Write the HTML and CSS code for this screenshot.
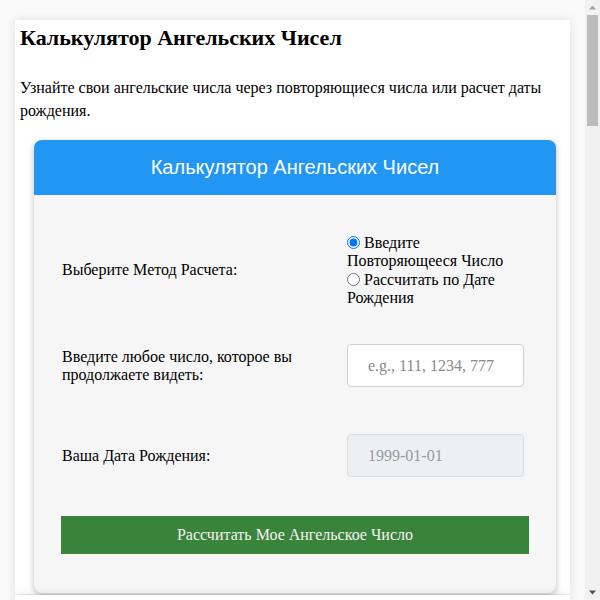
FILE: index.html
```html
<!DOCTYPE html>
<html lang="ru">
<head>
<meta charset="utf-8">
<title>Калькулятор Ангельских Чисел</title>
<link rel="stylesheet" href="styles.css">
</head>
<body>
<div class="viewport">
<div class="page">
  <h1 class="title">Калькулятор Ангельских Чисел</h1>
  <p class="intro">Узнайте свои ангельские числа через повторяющиеся числа или расчет даты рождения.</p>
  <div class="card">
    <div class="card-head">Калькулятор Ангельских Чисел</div>
    <div class="card-body">
      <div class="row row-method">
        <div class="label">Выберите Метод Расчета:</div>
        <div class="control radios">
          <label class="radio-opt"><input type="radio" name="method" class="radio" checked> Введите Повторяющееся Число</label>
          <label class="radio-opt"><input type="radio" name="method" class="radio"> Рассчитать по Дате Рождения</label>
        </div>
      </div>
      <div class="row row-number">
        <div class="label">Введите любое число, которое вы продолжаете видеть:</div>
        <div class="control"><input type="text" class="field" placeholder="e.g., 111, 1234, 777"></div>
      </div>
      <div class="row row-date">
        <div class="label">Ваша Дата Рождения:</div>
        <div class="control"><input type="text" class="field field-disabled" placeholder="1999-01-01" disabled></div>
      </div>
      <button class="submit" type="button">Рассчитать Мое Ангельское Число</button>
    </div>
  </div>
</div>
<div class="page page-more"></div>
</div>
<div class="scrollbar" aria-hidden="true">
  <div class="sb-btn"><svg width="15" height="15" viewBox="0 0 15 15"><path d="M4 9.5 L7.5 5.5 L11 9.5 Z" fill="#a3a3a3"/></svg></div>
  <div class="sb-track"><div class="sb-thumb"></div></div>
  <div class="sb-btn"><svg width="15" height="15" viewBox="0 0 15 15"><path d="M4 5.5 L11 5.5 L7.5 9.5 Z" fill="#505050"/></svg></div>
</div>
</body>
</html>
```

FILE: styles.css
```css
html, body {
  margin: 0;
  padding: 0;
  height: 100%;
  overflow: hidden;
}
body {
  background: #f9f9f9;
  font-family: "Liberation Serif", "Times New Roman", serif;
  font-size: 16px;
  color: #000;
  display: flex;
}
.viewport {
  flex: 1;
  min-width: 0;
  height: 100vh;
  overflow: hidden;
}
.scrollbar {
  width: 15px;
  flex: none;
  height: 100vh;
  background: #f1f1f1;
  display: flex;
  flex-direction: column;
}
.sb-btn {
  height: 15px;
  flex: none;
}
.sb-btn svg {
  display: block;
}
.sb-track {
  flex: 1;
}
.sb-thumb {
  margin: 0 2px;
  height: 111px;
  background: #bcbcbc;
}
.page {
  background: #fff;
  margin: 20px 15px 0;
  padding: 5px 5px 1px;
  box-shadow: 0 0 10px rgba(0, 0, 0, 0.1);
}
.title {
  font-size: 22px;
  font-weight: bold;
  margin: 0 0 25px;
  line-height: 26px;
}
.intro {
  margin: 0 0 18px;
  line-height: 23px;
}
.card {
  margin: 0 9px 0 14px;
  border-radius: 8px;
  overflow: hidden;
  box-shadow: 0 2px 6px rgba(0, 0, 0, 0.25);
  background: #f6f6f6;
}
.card-head {
  background: #2196f3;
  color: #fff;
  font-family: "Liberation Sans", Arial, sans-serif;
  font-size: 20px;
  height: 55px;
  display: flex;
  align-items: center;
  justify-content: center;
}
.card-body {
  padding: 38px 27px 39px;
}
.row {
  display: grid;
  grid-template-columns: 286px 177px;
  align-items: center;
}
.label {
  padding-left: 1px;
}
.row-method {
  margin-bottom: 37px;
}
.row-number {
  margin-bottom: 47px;
}
.row-date {
  margin-bottom: 39px;
}
.radios {
  display: flex;
  flex-direction: column;
  line-height: 18px;
}
.radio {
  margin: 3px 0 0 0;
  vertical-align: -1px;
}
.field {
  box-sizing: border-box;
  width: 177px;
  height: 43px;
  border: 1px solid #cfcfcf;
  border-radius: 4px;
  background: #fff;
  padding: 0 20px;
  font-family: "Liberation Serif", "Times New Roman", serif;
  font-size: 16px;
  display: block;
}
.field::placeholder {
  color: #8a8a8a;
}
.field-disabled {
  background: #eeeff1;
  border-color: #d9dadc;
}
.field-disabled::placeholder {
  color: #9a9a9a;
}
.submit {
  display: block;
  width: 468px;
  height: 38px;
  border: none;
  background: #3a833a;
  color: #f4f4f4;
  font-family: "Liberation Serif", "Times New Roman", serif;
  font-size: 16px;
  padding: 0;
}
.page-more {
  margin: 1px 15px 20px;
  min-height: 2400px;
}
```
